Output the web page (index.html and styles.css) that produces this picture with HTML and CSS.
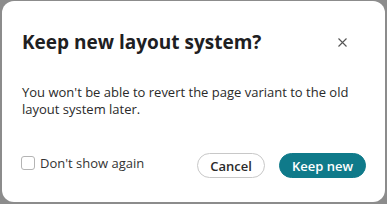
FILE: index.html
```html
<!DOCTYPE html>
<html lang="en">

<head>
    <meta charset="utf-8">
    <link rel="stylesheet" href="styles.css">
</head>

<body>
    <div class="dialog">
        <header class="dialog-header">
            <h1 class="dialog-title">Keep new layout system?</h1>
            <button class="close-button" aria-label="Close">
                <svg width="9" height="9" viewBox="0 0 9 9">
                    <path d="M0.5 0.5 L8.5 8.5 M8.5 0.5 L0.5 8.5" stroke="#555" stroke-width="1.1" fill="none" />
                </svg>
            </button>
        </header>
        <p class="dialog-body">You won't be able to revert the page variant to the old layout system later.</p>
        <footer class="dialog-footer">
            <label class="checkbox">
                <span class="box"></span>
                <span>Don't show again</span>
            </label>
            <div class="actions">
                <button class="btn btn-secondary">Cancel</button>
                <button class="btn btn-primary">Keep new</button>
            </div>
        </footer>
    </div>
</body>

</html>
```

FILE: styles.css
```css
html,
body {
    margin: 0;
    padding: 0;
    height: 100%;
}

body {
    background: #8c8c8c;
    font-family: "Open Sans", sans-serif;
    color: #222;
    padding: 1px 2px 2px;
    box-sizing: border-box;
}

.dialog {
    background: #fff;
    border-radius: 12px;
    height: 100%;
    box-sizing: border-box;
    padding: 28px 19px 0 20px;
    display: flex;
    flex-direction: column;
}

.dialog-header {
    display: flex;
    align-items: center;
    justify-content: space-between;
}

.dialog-title {
    margin: 0;
    font-size: 19px;
    font-weight: 700;
    line-height: 26px;
    color: #1e2022;
}

.close-button {
    border: 0;
    background: none;
    padding: 0;
    margin-right: 19px;
    display: flex;
}

.dialog-body {
    margin: 29px 0 0;
    font-size: 13px;
    line-height: 17px;
    color: #2a2a2a;
}

.dialog-footer {
    display: flex;
    align-items: center;
    justify-content: space-between;
    margin-top: 35px;
}

.checkbox {
    display: flex;
    align-items: center;
    gap: 5px;
    font-size: 13px;
    color: #333;
    margin: -6px 0 0 -1px;
}

.checkbox .box {
    width: 12px;
    height: 12px;
    border: 1px solid #b4b4b4;
    border-radius: 3px;
}

.actions {
    display: flex;
    gap: 14px;
}

.btn {
    font-family: "Open Sans", sans-serif;
    font-size: 13px;
    font-weight: 600;
    height: 25px;
    border-radius: 13px;
    padding: 0 12px;
    cursor: pointer;
}

.btn-secondary {
    background: #fff;
    border: 1px solid #c8c8c8;
    color: #2a2a2a;
}

.btn-primary {
    background: #0f7a8a;
    border: 1px solid #0f7a8a;
    color: #fff;
}
```
